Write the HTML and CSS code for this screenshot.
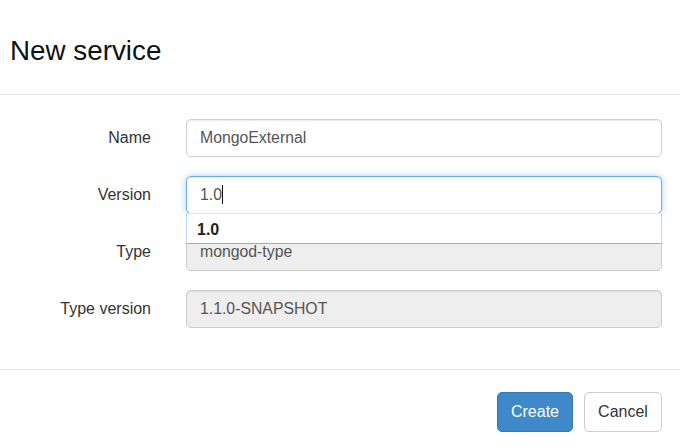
FILE: index.html
```html
<!DOCTYPE html>
<html>
<head>
<meta charset="utf-8">
<link rel="stylesheet" href="styles.css">
</head>
<body>
<div class="modal">
  <div class="modal-header">
    <h4 class="modal-title">New service</h4>
  </div>
  <div class="modal-body">
    <div class="form-row">
      <label class="form-label">Name</label>
      <input class="form-control" type="text" value="MongoExternal">
    </div>
    <div class="form-row">
      <label class="form-label">Version</label>
      <div class="field-wrap">
        <div class="form-control focused">1.0<span class="caret-line"></span></div>
        <div class="typeahead">
          <div class="typeahead-item">1.0</div>
        </div>
      </div>
    </div>
    <div class="form-row">
      <label class="form-label">Type</label>
      <input class="form-control" type="text" value="mongod-type" disabled>
    </div>
    <div class="form-row">
      <label class="form-label">Type version</label>
      <input class="form-control" type="text" value="1.1.0-SNAPSHOT" disabled>
    </div>
  </div>
  <div class="modal-footer">
    <button class="btn btn-primary">Create</button>
    <button class="btn btn-default">Cancel</button>
  </div>
</div>
</body>
</html>
```
FILE: styles.css
```css
* { box-sizing: border-box; }
html, body {
  margin: 0;
  padding: 0;
  background: #fff;
  font-family: "Liberation Sans", Arial, sans-serif;
  color: #333;
}
.modal {
  width: 680px;
  height: 447px;
}
.modal-header {
  padding: 36px 10px 28px;
  border-bottom: 1px solid #e5e5e5;
  height: 95px;
}
.modal-title {
  margin: 0;
  font-size: 27.8px;
  font-weight: normal;
  line-height: 30px;
  color: #111;
}
.modal-body {
  padding: 24px 18px 41px 0;
  display: flex;
  flex-direction: column;
  gap: 19px;
}
.form-row {
  display: grid;
  grid-template-columns: 151px 1fr;
  column-gap: 35px;
  align-items: center;
}
.form-label {
  text-align: right;
  font-size: 16px;
  color: #333;
}
.field-wrap {
  position: relative;
}
.form-control {
  display: block;
  width: 100%;
  height: 38px;
  padding: 0 13px;
  border: 1px solid #ccc;
  border-radius: 5px;
  background: #fff;
  font-family: "Liberation Sans", Arial, sans-serif;
  font-size: 15.8px;
  color: #555;
  line-height: 36px;
  box-shadow: inset 0 1px 1px rgba(0,0,0,.075);
  outline: none;
}
.form-control:disabled {
  background: #eee;
  color: #555;
  opacity: 1;
}
.form-control.focused {
  border-color: #66afe9;
  box-shadow: inset 0 1px 1px rgba(0,0,0,.075), 0 0 7px rgba(102,175,233,.6);
}
.caret-line {
  display: inline-block;
  width: 1px;
  height: 19px;
  background: #111;
  vertical-align: -4px;
}
.typeahead {
  position: absolute;
  left: 0;
  right: 0;
  top: 37px;
  height: 31px;
  background: #fff;
  border: 1px solid #b8d6f1;
  border-top: 1px solid #d6e6f5;
  border-bottom-color: #7fb4e4;
  z-index: 2;
}
.typeahead-item {
  padding: 1px 10px 0;
  font-size: 16px;
  font-weight: bold;
  line-height: 30px;
  color: #222;
}
.modal-footer {
  border-top: 1px solid #e5e5e5;
  padding: 22px 18px 0 0;
  display: flex;
  justify-content: flex-end;
  gap: 11px;
}
.btn {
  height: 40px;
  padding: 0 10px;
  border-radius: 5px;
  font-family: "Liberation Sans", Arial, sans-serif;
  font-size: 16px;
  cursor: pointer;
}
.btn-primary {
  width: 76px;
  background: #3f89ca;
  border: 1px solid #3579b8;
  color: #fff;
}
.btn-default {
  width: 78px;
  background: #fff;
  border: 1px solid #ccc;
  color: #333;
}
```
